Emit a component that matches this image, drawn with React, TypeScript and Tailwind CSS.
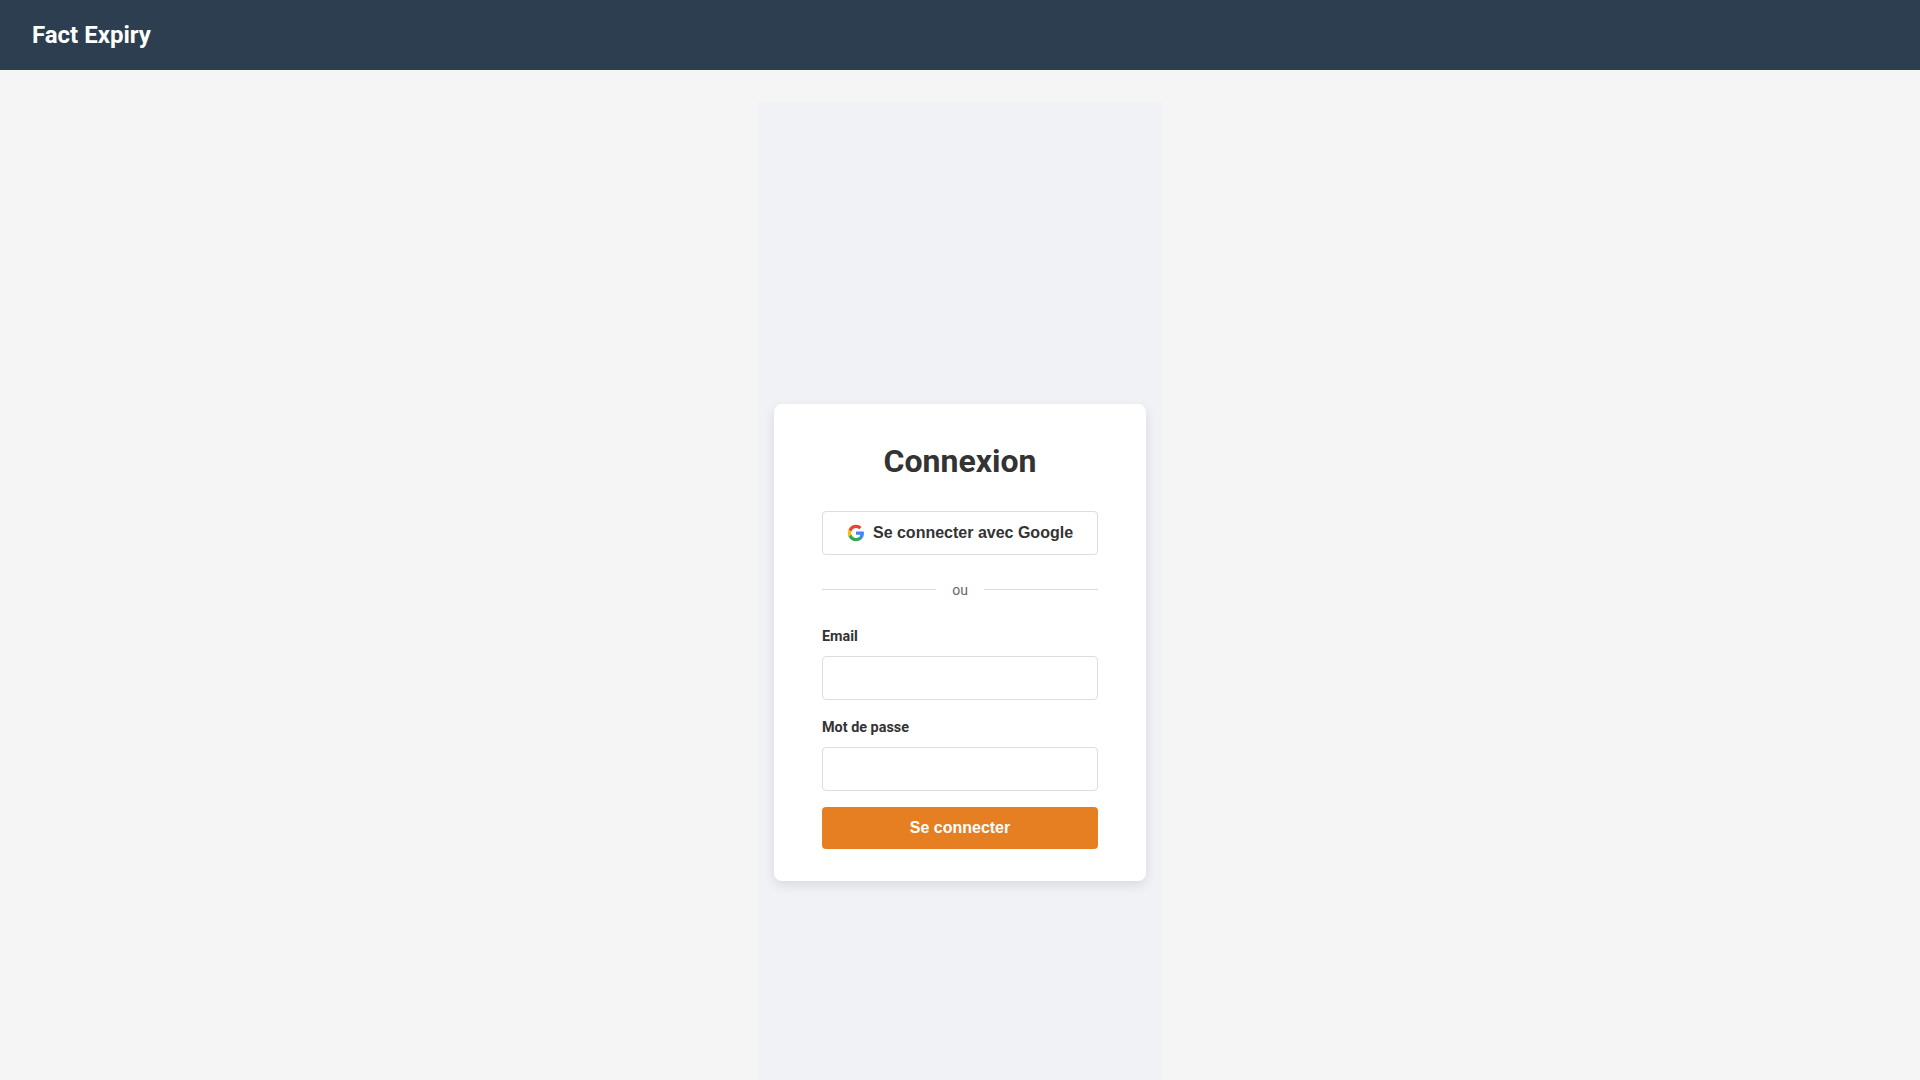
import React from 'react';

function GoogleIcon() {
    return (
        <svg width="18" height="18" viewBox="0 0 24 24" className="shrink-0">
            <path fill="#4285F4" d="M22.56 12.25c0-.78-.07-1.53-.2-2.25H12v4.26h5.92c-.26 1.37-1.04 2.53-2.21 3.31v2.77h3.57c2.08-1.92 3.28-4.74 3.28-8.09z" />
            <path fill="#34A853" d="M12 23c2.97 0 5.46-.98 7.28-2.66l-3.57-2.77c-.98.66-2.23 1.06-3.71 1.06-2.86 0-5.29-1.93-6.16-4.53H2.18v2.84C3.99 20.53 7.7 23 12 23z" />
            <path fill="#FBBC05" d="M5.84 14.09c-.22-.66-.35-1.36-.35-2.09s.13-1.43.35-2.09V7.07H2.18C1.43 8.55 1 10.22 1 12s.43 3.45 1.18 4.93l2.85-2.22.81-.62z" />
            <path fill="#EA4335" d="M12 5.38c1.62 0 3.06.56 4.21 1.64l3.15-3.15C17.45 2.09 14.97 1 12 1 7.7 1 3.99 3.47 2.18 7.07l3.66 2.84c.87-2.6 3.3-4.53 6.16-4.53z" />
        </svg>
    );
}

export default function App() {
    return (
        <div className="h-screen overflow-hidden bg-[#f5f5f5] font-['Roboto',sans-serif] text-[#333] leading-[1.6]">
            <header className="h-[70px] bg-[#2c3e50] px-8 flex items-center">
                <span className="text-2xl font-bold text-white">Fact Expiry</span>
            </header>

            <main className="pt-8 flex justify-center">
                <div className="w-[404px] h-[1081px] bg-[#f0f2f5] flex items-center justify-center">
                    <div className="w-[372px] bg-white rounded-lg shadow-[0_4px_12px_rgba(0,0,0,0.1)] px-12 py-8">
                        <h1 className="text-[32px] leading-[1.6] font-bold text-center mb-[23.6px]">Connexion</h1>

                        <button className="w-full h-11 bg-white border border-[#ddd] rounded flex items-center justify-center gap-2 font-['Liberation_Sans',sans-serif] text-base font-bold text-[#333]">
                            <GoogleIcon />
                            Se connecter avec Google
                        </button>

                        <div className="flex items-center gap-4 mt-6 mb-[24.4px] text-sm leading-[1.6] text-[#666]">
                            <div className="flex-1 h-px mb-[1px] bg-[#ddd]" />
                            <span>ou</span>
                            <div className="flex-1 h-px mb-[1px] bg-[#ddd]" />
                        </div>

                        <label className="block text-[14.4px] leading-[22.4px] font-bold mb-2">Email</label>
                        <input type="email" className="block w-full h-11 border border-[#ddd] rounded bg-white mb-[16.8px]" />

                        <label className="block text-[14.4px] leading-[21.6px] font-bold mb-2">Mot de passe</label>
                        <input type="password" className="block w-full h-11 border border-[#ddd] rounded bg-white mb-4" />

                        <button className="w-full h-[42px] bg-[#e67e22] rounded font-['Liberation_Sans',sans-serif] text-base font-bold text-white">
                            Se connecter
                        </button>
                    </div>
                </div>
            </main>
        </div>
    );
}
